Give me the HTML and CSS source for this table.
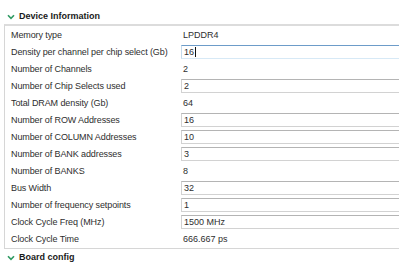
FILE: index.html
```html
<!DOCTYPE html>
<html>
<head>
<meta charset="utf-8">
<link rel="stylesheet" href="styles.css">
</head>
<body>
<div class="page">
  <div class="section-header">
    <svg class="chev" width="8" height="6" viewBox="0 0 8 6"><path d="M1 1.2 L4 4.4 L7 1.2" fill="none" stroke="#2f9a63" stroke-width="1.6"/></svg>
    <span>Device Information</span>
  </div>
  <div class="panel">
    <div class="row"><div class="label">Memory type</div><div class="value">LPDDR4</div></div>
    <div class="row"><div class="label">Density per channel per chip select (Gb)</div><div class="field focus">16<span class="caret"></span></div></div>
    <div class="row"><div class="label">Number of Channels</div><div class="value">2</div></div>
    <div class="row"><div class="label">Number of Chip Selects used</div><div class="field">2</div></div>
    <div class="row"><div class="label">Total DRAM density (Gb)</div><div class="value">64</div></div>
    <div class="row"><div class="label">Number of ROW Addresses</div><div class="field">16</div></div>
    <div class="row"><div class="label">Number of COLUMN Addresses</div><div class="field">10</div></div>
    <div class="row"><div class="label">Number of BANK addresses</div><div class="field">3</div></div>
    <div class="row"><div class="label">Number of BANKS</div><div class="value">8</div></div>
    <div class="row"><div class="label">Bus Width</div><div class="field">32</div></div>
    <div class="row"><div class="label">Number of frequency setpoints</div><div class="field">1</div></div>
    <div class="row"><div class="label">Clock Cycle Freq (MHz)</div><div class="field">1500 MHz</div></div>
    <div class="row"><div class="label">Clock Cycle Time</div><div class="value">666.667 ps</div></div>
  </div>
  <div class="section-header">
    <svg class="chev" width="8" height="6" viewBox="0 0 8 6"><path d="M1 1.2 L4 4.4 L7 1.2" fill="none" stroke="#2f9a63" stroke-width="1.6"/></svg>
    <span>Board config</span>
  </div>
</div>
</body>
</html>
```
FILE: styles.css
```css
html, body {
  margin: 0;
  padding: 0;
  background: #ffffff;
}
.page {
  padding-top: 8px;
  font-family: "Liberation Sans", Arial, sans-serif;
  font-size: 9px;
  color: #2e2e2e;
}
.section-header {
  height: 16px;
  display: flex;
  align-items: center;
  padding-left: 7px;
  font-weight: bold;
  font-size: 9px;
  color: #1a1a1a;
}
.chev {
  margin-right: 4px;
  margin-top: 1px;
}
.panel {
  margin-left: 4px;
  border: 1px solid #d6d6d6;
  border-top: 2px solid #dcdcdc;
  border-right: none;
  padding-top: 0;
  padding-bottom: 1px;
  padding-left: 6px;
}
.row {
  display: grid;
  grid-template-columns: 170px 1fr;
  height: 17px;
  align-items: center;
}
.label {
  white-space: nowrap;
  letter-spacing: -0.1px;
}
.value {
  padding-left: 2px;
}
.field {
  height: 12px;
  line-height: 12px;
  border: 1px solid #d2d2d2;
  border-top-color: #b4b4b4;
  border-right: none;
  padding-left: 2px;
  display: flex;
  align-items: center;
}
.field.focus {
  border-color: #c5dbec;
  border-top-color: #6d9cc9;
  border-bottom-color: #d7e9f6;
}
.caret {
  display: inline-block;
  width: 1px;
  height: 10px;
  background: #111;
  margin-left: 1px;
}
```
